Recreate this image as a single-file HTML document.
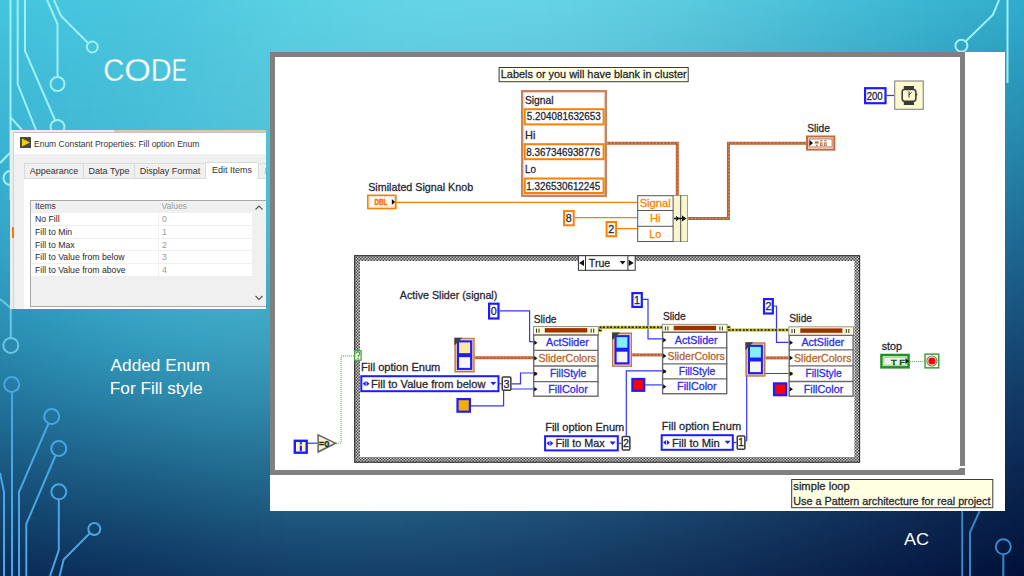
<!DOCTYPE html>
<html><head><meta charset="utf-8">
<style>
html,body{margin:0;padding:0;}
body{width:1024px;height:576px;overflow:hidden;position:relative;font-family:"Liberation Sans",sans-serif;
background:linear-gradient(172deg,#62cde0 0%,#52c0d8 22%,#3aa6c8 45%,#2180ab 62%,#16578a 78%,#0e3a6a 90%,#0b2c5a 100%);}
.abs{position:absolute;}
#bgdark{left:0;top:0;width:1024px;height:576px;background:radial-gradient(ellipse 700px 500px at 1024px 576px,rgba(8,22,70,0.75),rgba(8,22,70,0) 100%);}
#title{left:104px;top:50px;color:#fff;font-size:30px;letter-spacing:0px;}
#note{left:111px;top:354px;color:#fff;font-size:17px;line-height:23px;}
#ac{left:904px;top:529px;color:#fff;font-size:15px;}
.tab{height:15px;border:1px solid #dadada;border-right:0;background:#f0f0f0;font-size:9px;color:#333;text-align:center;line-height:15px;box-sizing:border-box;height:16px;}
.lrow{left:21px;width:221px;height:12.8px;background:#fff;border-bottom:1px solid #efefef;box-sizing:border-box;font-size:8.7px;color:#2a2a2a;line-height:13.6px;padding-left:4px;}
.lrow span{position:absolute;left:126.5px;top:0;color:#9a9a9a;border-left:1px solid #efefef;padding-left:3.5px;height:12px;}
</style></head><body>
<div class="abs" style="left:0;top:0;width:1024px;height:576px;overflow:hidden;"><div class="abs" style="left:-40px;top:-36px;width:1104px;height:648px;filter:blur(7px);">
<div style="height:12px;background:linear-gradient(90deg,#43c8e3 0px,#46c9e3 48px,#48cae2 96px,#4bcae2 144px,#4ecce2 192px,#52cee3 240px,#57d1e5 288px,#5cd4e6 336px,#60d6e8 384px,#63d8e9 432px,#66d8e9 480px,#67d8e9 528px,#67d8e8 576px,#65d6e7 624px,#61d4e6 672px,#5dd1e4 720px,#57cde2 768px,#51cae0 816px,#4bc6dd 864px,#44c2db 912px,#3fbed8 960px,#39b9d5 1008px,#35b5d2 1056px,#31b0ce 1104px)"></div>
<div style="height:12px;background:linear-gradient(90deg,#43c6e1 0px,#45c7e1 48px,#47c8e1 96px,#4ac9e0 144px,#4dcae0 192px,#52cce1 240px,#57cfe3 288px,#5bd2e5 336px,#5fd5e6 384px,#63d6e7 432px,#65d7e8 480px,#66d7e7 528px,#66d6e7 576px,#64d4e6 624px,#61d1e4 672px,#5ccee2 720px,#56cbe0 768px,#50c7de 816px,#4ac3db 864px,#43bfd8 912px,#3dbbd5 960px,#38b6d2 1008px,#34b2cf 1056px,#30adcc 1104px)"></div>
<div style="height:12px;background:linear-gradient(90deg,#42c5e0 0px,#44c6e0 48px,#46c6e0 96px,#49c7df 144px,#4cc8df 192px,#51cbe0 240px,#56cee2 288px,#5bd1e4 336px,#5fd3e5 384px,#62d4e6 432px,#65d5e6 480px,#66d5e6 528px,#66d4e5 576px,#64d2e4 624px,#60cfe2 672px,#5bcce0 720px,#55c8de 768px,#4fc5db 816px,#49c1d9 864px,#42bcd6 912px,#3cb8d3 960px,#37b3d0 1008px,#32afcd 1056px,#2eaac9 1104px)"></div>
<div style="height:12px;background:linear-gradient(90deg,#41c3de 0px,#43c4df 48px,#46c5de 96px,#48c6de 144px,#4cc7de 192px,#50c9df 240px,#56cde1 288px,#5ad0e3 336px,#5ed2e4 384px,#62d3e5 432px,#64d3e5 480px,#65d3e4 528px,#65d2e3 576px,#63d0e2 624px,#5fcde0 672px,#5acade 720px,#54c6dc 768px,#4ec2d9 816px,#48bed7 864px,#41b9d4 912px,#3bb5d1 960px,#36b0cd 1008px,#31acca 1056px,#2da7c7 1104px)"></div>
<div style="height:12px;background:linear-gradient(90deg,#40c1dd 0px,#42c3dd 48px,#45c3dd 96px,#48c4dd 144px,#4bc5dd 192px,#50c8de 240px,#55cbe0 288px,#5acee2 336px,#5ed0e3 384px,#61d1e3 432px,#63d2e3 480px,#64d1e3 528px,#64d0e2 576px,#62cee0 624px,#5ecbde 672px,#59c7dc 720px,#54c3da 768px,#4dbfd7 816px,#47bbd4 864px,#40b7d1 912px,#3ab2ce 960px,#35adcb 1008px,#30a9c7 1056px,#2ca4c4 1104px)"></div>
<div style="height:12px;background:linear-gradient(90deg,#3fc0dc 0px,#42c1dc 48px,#44c2dc 96px,#47c3dc 144px,#4bc4dc 192px,#4fc7dd 240px,#55cadf 288px,#59cde1 336px,#5dcfe2 384px,#60d0e2 432px,#62d0e2 480px,#64cfe1 528px,#64cee0 576px,#62cbde 624px,#5ec8dc 672px,#58c5da 720px,#53c1d7 768px,#4cbdd5 816px,#46b8d2 864px,#3fb4cf 912px,#39afcc 960px,#34aac8 1008px,#2fa5c5 1056px,#2ba1c2 1104px)"></div>
<div style="height:12px;background:linear-gradient(90deg,#3fbeda 0px,#41c0db 48px,#44c1db 96px,#47c2db 144px,#4ac3db 192px,#4fc6dc 240px,#54c9de 288px,#59cce0 336px,#5dcde1 384px,#60cee1 432px,#62cee1 480px,#63cde0 528px,#63ccde 576px,#61c9dc 624px,#5dc6da 672px,#57c2d8 720px,#52bed5 768px,#4bbad3 816px,#45b5d0 864px,#3eb1cd 912px,#38acc9 960px,#33a7c6 1008px,#2ea2c2 1056px,#2a9ebf 1104px)"></div>
<div style="height:12px;background:linear-gradient(90deg,#3ebcd9 0px,#40beda 48px,#43c0da 96px,#46c1da 144px,#4ac2da 192px,#4fc5dc 240px,#54c8dd 288px,#58cbdf 336px,#5cccdf 384px,#5fcde0 432px,#61ccdf 480px,#62cbde 528px,#62c9dd 576px,#60c7db 624px,#5bc3d8 672px,#56c0d6 720px,#50bbd3 768px,#4ab7d0 816px,#44b3cd 864px,#3daeca 912px,#37a9c7 960px,#32a4c3 1008px,#2d9fc0 1056px,#299bbc 1104px)"></div>
<div style="height:12px;background:linear-gradient(90deg,#3dbbd8 0px,#40bdd9 48px,#42bed9 96px,#46c0da 144px,#49c2da 192px,#4ec4db 240px,#53c7dd 288px,#58c9de 336px,#5bcbde 384px,#5ecbde 432px,#60cbde 480px,#61c9dd 528px,#61c7db 576px,#5ec5d9 624px,#5ac1d6 672px,#55bdd4 720px,#4fb9d1 768px,#49b4ce 816px,#43b0cb 864px,#3cabc8 912px,#36a6c4 960px,#31a1c1 1008px,#2c9cbd 1056px,#2898ba 1104px)"></div>
<div style="height:12px;background:linear-gradient(90deg,#3cb9d7 0px,#3fbbd8 48px,#42bdd9 96px,#45bfd9 144px,#49c1d9 192px,#4ec4db 240px,#53c6dc 288px,#57c8dd 336px,#5bc9dd 384px,#5dcadd 432px,#5fc9dc 480px,#60c7db 528px,#5fc5d9 576px,#5dc2d7 624px,#59bfd4 672px,#54bad2 720px,#4eb6cf 768px,#48b1cc 816px,#42adc8 864px,#3ba8c5 912px,#35a3c2 960px,#309ebe 1008px,#2b99bb 1056px,#2795b7 1104px)"></div>
<div style="height:12px;background:linear-gradient(90deg,#3cb7d5 0px,#3ebad7 48px,#41bcd8 96px,#45bed8 144px,#49c0d9 192px,#4ec3da 240px,#53c5db 288px,#57c7dc 336px,#5ac8dc 384px,#5cc8dc 432px,#5ec7db 480px,#5fc5d9 528px,#5ec3d7 576px,#5cc0d5 624px,#58bcd2 672px,#53b8cf 720px,#4db3cc 768px,#47afc9 816px,#41aac6 864px,#3aa5c3 912px,#34a0bf 960px,#2f9bbc 1008px,#2a96b8 1056px,#2691b5 1104px)"></div>
<div style="height:12px;background:linear-gradient(90deg,#3bb6d4 0px,#3eb9d6 48px,#41bbd7 96px,#44bdd8 144px,#48c0d9 192px,#4dc2da 240px,#52c5db 288px,#56c6db 336px,#59c7db 384px,#5bc7db 432px,#5dc5d9 480px,#5ec3d8 528px,#5dc1d6 576px,#5abdd3 624px,#57bad0 672px,#52b5cd 720px,#4cb1ca 768px,#46acc7 816px,#40a7c4 864px,#39a2c0 912px,#339dbd 960px,#2e98b9 1008px,#2993b6 1056px,#258eb2 1104px)"></div>
<div style="height:12px;background:linear-gradient(90deg,#3ab4d3 0px,#3db7d5 48px,#40bad6 96px,#44bcd7 144px,#48bfd8 192px,#4dc1d9 240px,#52c4da 288px,#55c5db 336px,#58c6da 384px,#5ac5d9 432px,#5cc4d8 480px,#5cc1d6 528px,#5bbfd4 576px,#59bbd1 624px,#55b7ce 672px,#50b2cb 720px,#4baec8 768px,#45a9c4 816px,#3ea4c1 864px,#389fbe 912px,#339aba 960px,#2d95b7 1008px,#2990b3 1056px,#248baf 1104px)"></div>
<div style="height:12px;background:linear-gradient(90deg,#39b2d2 0px,#3cb6d4 48px,#40b9d6 96px,#43bcd7 144px,#48bed8 192px,#4cc1d9 240px,#51c3d9 288px,#54c4da 336px,#57c4d9 384px,#59c3d8 432px,#5bc2d7 480px,#5bbfd4 528px,#5abcd2 576px,#58b9cf 624px,#54b4cc 672px,#4fb0c9 720px,#4aabc5 768px,#44a6c2 816px,#3da1be 864px,#379cbb 912px,#3297b8 960px,#2c92b4 1008px,#288db1 1056px,#2488ad 1104px)"></div>
<div style="height:12px;background:linear-gradient(90deg,#38b1d0 0px,#3bb4d3 48px,#3fb8d5 96px,#43bbd6 144px,#47bed7 192px,#4cc0d8 240px,#50c2d9 288px,#54c3d9 336px,#56c3d8 384px,#58c2d7 432px,#59c0d5 480px,#5abdd3 528px,#59bad0 576px,#56b6cd 624px,#52b2ca 672px,#4eadc6 720px,#48a8c3 768px,#42a3bf 816px,#3c9ebc 864px,#3698b8 912px,#3193b5 960px,#2b8fb1 1008px,#278aae 1056px,#2385aa 1104px)"></div>
<div style="height:12px;background:linear-gradient(90deg,#38afcf 0px,#3bb3d2 48px,#3eb7d4 96px,#42bad6 144px,#47bdd7 192px,#4bbfd8 240px,#4fc1d8 288px,#53c2d8 336px,#55c1d7 384px,#57c0d6 432px,#58bed3 480px,#58bbd1 528px,#57b7ce 576px,#55b3cb 624px,#51afc8 672px,#4caac4 720px,#47a5c1 768px,#41a0bd 816px,#3b9ab9 864px,#3595b6 912px,#3090b2 960px,#2b8baf 1008px,#2686ab 1056px,#2281a7 1104px)"></div>
<div style="height:12px;background:linear-gradient(90deg,#37adcd 0px,#3ab1d0 48px,#3eb5d3 96px,#42b9d5 144px,#46bcd6 192px,#4bbed7 240px,#4fc0d8 288px,#52c0d7 336px,#54c0d6 384px,#56bed4 432px,#57bcd2 480px,#57b9cf 528px,#56b5cc 576px,#53b1c9 624px,#4facc5 672px,#4ba7c2 720px,#46a2be 768px,#409dba 816px,#3a97b7 864px,#3492b3 912px,#2f8daf 960px,#2a88ac 1008px,#2583a8 1056px,#217ea4 1104px)"></div>
<div style="height:12px;background:linear-gradient(90deg,#36abcc 0px,#39b0cf 48px,#3db4d2 96px,#41b8d4 144px,#45bbd6 192px,#4abdd7 240px,#4ebfd7 288px,#51bfd6 336px,#53bed5 384px,#55bcd3 432px,#55bad0 480px,#55b6cd 528px,#54b3ca 576px,#52aec7 624px,#4ea9c3 672px,#49a4bf 720px,#449fbc 768px,#3f99b8 816px,#3994b4 864px,#338eb0 912px,#2e89ac 960px,#2984a9 1008px,#247fa5 1056px,#207aa1 1104px)"></div>
<div style="height:12px;background:linear-gradient(90deg,#35a9ca 0px,#38aece 48px,#3cb3d1 96px,#40b7d4 144px,#45bad5 192px,#49bcd6 240px,#4dbed6 288px,#50bed5 336px,#52bdd4 384px,#53bad1 432px,#54b8cf 480px,#54b4cb 528px,#52b0c8 576px,#50abc4 624px,#4ca7c1 672px,#48a1bd 720px,#439cb9 768px,#3d96b5 816px,#3891b1 864px,#328bad 912px,#2d86a9 960px,#2881a6 1008px,#237ca2 1056px,#1f769e 1104px)"></div>
<div style="height:12px;background:linear-gradient(90deg,#34a7c9 0px,#38accd 48px,#3bb1d0 96px,#40b5d3 144px,#44b9d5 192px,#48bbd5 240px,#4cbcd5 288px,#4fbcd4 336px,#51bbd2 384px,#52b8d0 432px,#53b5cd 480px,#52b2ca 528px,#51adc6 576px,#4ea9c2 624px,#4ba4be 672px,#469eba 720px,#4199b6 768px,#3c93b2 816px,#368dae 864px,#3188aa 912px,#2c82a6 960px,#277da3 1008px,#22789f 1056px,#1e739b 1104px)"></div>
<div style="height:12px;background:linear-gradient(90deg,#33a5c7 0px,#37aacb 48px,#3ab0cf 96px,#3fb4d2 144px,#43b8d4 192px,#47bad4 240px,#4bbbd4 288px,#4ebbd3 336px,#50b9d1 384px,#51b6ce 432px,#51b3cb 480px,#51afc7 528px,#4fabc4 576px,#4da6c0 624px,#49a1bc 672px,#459bb8 720px,#4096b4 768px,#3b90b0 816px,#358aab 864px,#3084a7 912px,#2b7fa3 960px,#2679a0 1008px,#21749c 1056px,#1d6f97 1104px)"></div>
<div style="height:12px;background:linear-gradient(90deg,#32a3c5 0px,#36a8ca 48px,#3aaece 96px,#3eb3d1 144px,#42b6d3 192px,#46b9d3 240px,#4abad3 288px,#4db9d2 336px,#4eb7cf 384px,#4fb4cc 432px,#4fb1c9 480px,#4fadc5 528px,#4da8c2 576px,#4ba3be 624px,#489eba 672px,#4398b5 720px,#3f92b1 768px,#398dad 816px,#3487a9 864px,#2f81a4 912px,#297ba0 960px,#25759c 1008px,#207098 1056px,#1c6b94 1104px)"></div>
<div style="height:12px;background:linear-gradient(90deg,#31a0c3 0px,#35a6c8 48px,#39accc 96px,#3db1cf 144px,#41b5d2 192px,#45b7d2 240px,#49b8d2 288px,#4bb7d0 336px,#4db5ce 384px,#4eb2cb 432px,#4eaec7 480px,#4daac3 528px,#4ca5bf 576px,#49a0bb 624px,#469bb7 672px,#4295b3 720px,#3d8fae 768px,#3889aa 816px,#3383a6 864px,#2e7da1 912px,#28779d 960px,#247299 1008px,#1f6c95 1056px,#1b6791 1104px)"></div>
<div style="height:12px;background:linear-gradient(90deg,#309ec1 0px,#34a4c6 48px,#38aacb 96px,#3cafce 144px,#40b3d0 192px,#44b5d1 240px,#48b6d1 288px,#4ab5cf 336px,#4bb3cc 384px,#4cb0c9 432px,#4cacc5 480px,#4ba7c1 528px,#4aa2bd 576px,#479db9 624px,#4498b4 672px,#4092b0 720px,#3c8cac 768px,#3786a7 816px,#3280a3 864px,#2c7a9e 912px,#27749a 960px,#236e96 1008px,#1e6892 1056px,#1a638d 1104px)"></div>
<div style="height:12px;background:linear-gradient(90deg,#2f9bbf 0px,#33a2c4 48px,#36a8c9 96px,#3badcd 144px,#3fb1cf 192px,#43b4d0 240px,#46b4cf 288px,#49b3cd 336px,#4ab0ca 384px,#4badc7 432px,#4ba9c3 480px,#4aa4bf 528px,#489fbb 576px,#469ab6 624px,#4295b2 672px,#3f8fad 720px,#3a89a9 768px,#3583a4 816px,#307ca0 864px,#2b769b 912px,#267097 960px,#216a92 1008px,#1d648e 1056px,#19608a 1104px)"></div>
<div style="height:12px;background:linear-gradient(90deg,#2e98bc 0px,#319fc2 48px,#35a5c7 96px,#3aabcb 144px,#3eafcd 192px,#42b1ce 240px,#45b2cd 288px,#47b1cb 336px,#48aec8 384px,#49aac4 432px,#49a6c0 480px,#48a1bc 528px,#469cb8 576px,#4497b4 624px,#4191af 672px,#3d8cab 720px,#3985a6 768px,#347fa1 816px,#2f799d 864px,#2a7398 912px,#256c94 960px,#20668f 1008px,#1c618b 1056px,#185c87 1104px)"></div>
<div style="height:12px;background:linear-gradient(90deg,#2d95ba 0px,#309cbf 48px,#34a3c5 96px,#38a8c9 144px,#3dadcb 192px,#41afcc 240px,#44b0cb 288px,#46aec9 336px,#47abc6 384px,#47a8c2 432px,#47a3be 480px,#469eba 528px,#4499b5 576px,#4294b1 624px,#3f8eac 672px,#3b88a8 720px,#3782a3 768px,#327c9e 816px,#2e759a 864px,#296f95 912px,#246990 960px,#1f628c 1008px,#1b5d87 1056px,#175883 1104px)"></div>
<div style="height:12px;background:linear-gradient(90deg,#2c92b7 0px,#2f99bd 48px,#33a0c2 96px,#37a6c7 144px,#3baac9 192px,#3fadca 240px,#42adc9 288px,#44acc7 336px,#45a9c4 384px,#45a5c0 432px,#45a0bc 480px,#449bb7 528px,#4396b3 576px,#4091ae 624px,#3d8baa 672px,#3a85a5 720px,#357fa0 768px,#31789b 816px,#2c7297 864px,#286b92 912px,#23658d 960px,#1e5f88 1008px,#1a5984 1056px,#165480 1104px)"></div>
<div style="height:12px;background:linear-gradient(90deg,#2a8fb4 0px,#2e96ba 48px,#319dc0 96px,#36a3c4 144px,#3aa7c6 192px,#3eaac8 240px,#41abc7 288px,#42a9c5 336px,#43a6c1 384px,#44a2bd 432px,#439db9 480px,#4298b5 528px,#4193b0 576px,#3e8dac 624px,#3b88a7 672px,#3882a2 720px,#347b9d 768px,#307598 816px,#2b6f94 864px,#26688f 912px,#22618a 960px,#1d5b85 1008px,#195580 1056px,#15517c 1104px)"></div>
<div style="height:12px;background:linear-gradient(90deg,#298bb1 0px,#2c92b7 48px,#3099bd 96px,#349fc1 144px,#38a4c4 192px,#3ca7c5 240px,#3fa7c4 288px,#40a6c2 336px,#41a2bf 384px,#429ebb 432px,#419ab6 480px,#4095b2 528px,#3f90ad 576px,#3d8aa9 624px,#3a84a4 672px,#367e9f 720px,#32789a 768px,#2e7295 816px,#2a6b90 864px,#25648b 912px,#215e86 960px,#1c5782 1008px,#18527d 1056px,#144d79 1104px)"></div>
<div style="height:12px;background:linear-gradient(90deg,#2888ae 0px,#2b8fb4 48px,#2f96ba 96px,#339cbe 144px,#37a0c1 192px,#3aa3c2 240px,#3da4c2 288px,#3fa2bf 336px,#3f9fbc 384px,#409bb8 432px,#3f96b3 480px,#3e91af 528px,#3d8caa 576px,#3b87a6 624px,#3881a1 672px,#347b9c 720px,#317597 768px,#2d6e92 816px,#28688d 864px,#246188 912px,#1f5a83 960px,#1b547e 1008px,#174e7a 1056px,#134975 1104px)"></div>
<div style="height:12px;background:linear-gradient(90deg,#2684aa 0px,#2a8bb0 48px,#2d92b6 96px,#3198ba 144px,#359cbd 192px,#389fbf 240px,#3ba0be 288px,#3d9fbc 336px,#3d9bb9 384px,#3e97b5 432px,#3d93b1 480px,#3c8eac 528px,#3b89a8 576px,#3983a3 624px,#367d9e 672px,#337799 720px,#2f7194 768px,#2b6b8f 816px,#27648a 864px,#235d85 912px,#1e5780 960px,#1a507b 1008px,#164a76 1056px,#124672 1104px)"></div>
<div style="height:12px;background:linear-gradient(90deg,#2580a7 0px,#2887ac 48px,#2c8db2 96px,#2f93b7 144px,#3398b9 192px,#369bbb 240px,#399cbb 288px,#3b9bb9 336px,#3b98b6 384px,#3c94b2 432px,#3b8fad 480px,#3b8aa9 528px,#3985a4 576px,#3780a0 624px,#347a9b 672px,#317496 720px,#2d6e91 768px,#2a678c 816px,#256187 864px,#215a82 912px,#1d537c 960px,#194d77 1008px,#154773 1056px,#11426f 1104px)"></div>
<div style="height:12px;background:linear-gradient(90deg,#247ca3 0px,#2782a8 48px,#2a89ae 96px,#2d8fb2 144px,#3193b5 192px,#3497b7 240px,#3798b7 288px,#3897b5 336px,#3994b2 384px,#3a90ae 432px,#398caa 480px,#3887a6 528px,#3781a1 576px,#357c9d 624px,#327698 672px,#2f7093 720px,#2c6a8e 768px,#286489 816px,#245d84 864px,#20577f 912px,#1c5079 960px,#184974 1008px,#14446f 1056px,#103f6b 1104px)"></div>
<div style="height:12px;background:linear-gradient(90deg,#22779f 0px,#257ea4 48px,#2884a9 96px,#2b8aae 144px,#2f8eb1 192px,#3292b3 240px,#3493b3 288px,#3692b2 336px,#3790af 384px,#388cab 432px,#3788a7 480px,#3683a3 528px,#357e9e 576px,#33789a 624px,#307395 672px,#2d6d90 720px,#2a678b 768px,#276086 816px,#235a81 864px,#1f537b 912px,#1b4c76 960px,#174671 1008px,#13406c 1056px,#0f3c68 1104px)"></div>
<div style="height:12px;background:linear-gradient(90deg,#21739b 0px,#2479a0 48px,#277fa5 96px,#2a84a9 144px,#2d89ac 192px,#308dae 240px,#328faf 288px,#348eae 336px,#358bab 384px,#3588a8 432px,#3584a4 480px,#347f9f 528px,#337a9b 576px,#317596 624px,#2f6f92 672px,#2c698d 720px,#286388 768px,#255d83 816px,#21567e 864px,#1d5078 912px,#1a4973 960px,#16436d 1008px,#123d68 1056px,#0e3864 1104px)"></div>
<div style="height:12px;background:linear-gradient(90deg,#1f6e97 0px,#22749b 48px,#257aa0 96px,#287fa4 144px,#2b84a7 192px,#2d88aa 240px,#308aab 288px,#3289aa 336px,#3387a7 384px,#3384a4 432px,#3380a0 480px,#327b9c 528px,#317698 576px,#2f7193 624px,#2d6b8f 672px,#2a668a 720px,#276085 768px,#235980 816px,#20537a 864px,#1c4c75 912px,#18466f 960px,#153f6a 1008px,#113965 1056px,#0e3561 1104px)"></div>
<div style="height:12px;background:linear-gradient(90deg,#1e6a92 0px,#206f97 48px,#23749b 96px,#26799f 144px,#287ea2 192px,#2b82a5 240px,#2d85a6 288px,#2f84a5 336px,#3182a3 384px,#317fa0 432px,#317c9d 480px,#307799 528px,#2f7294 576px,#2d6d90 624px,#2b688b 672px,#286286 720px,#255c82 768px,#22567d 816px,#1e5077 864px,#1b4972 912px,#17436c 960px,#143c67 1008px,#103662 1056px,#0d325e 1104px)"></div>
<div style="height:12px;background:linear-gradient(90deg,#1c658e 0px,#1f6a92 48px,#216f96 96px,#24749a 144px,#26799d 192px,#297da0 240px,#2b7fa2 288px,#2d7fa1 336px,#2e7e9f 384px,#2f7b9c 432px,#2f7799 480px,#2e7395 528px,#2d6e91 576px,#2b698c 624px,#296488 672px,#265e83 720px,#23597e 768px,#205279 816px,#1d4c74 864px,#1a466f 912px,#163f69 960px,#123963 1008px,#0f335e 1056px,#0c2f5a 1104px)"></div>
<div style="height:12px;background:linear-gradient(90deg,#1b6089 0px,#1d658d 48px,#1f6991 96px,#226e95 144px,#247398 192px,#26779b 240px,#297a9d 288px,#2b7a9d 336px,#2c799b 384px,#2d7698 432px,#2d7395 480px,#2c6f91 528px,#2b6a8d 576px,#296589 624px,#276085 672px,#255b80 720px,#22557b 768px,#1f4f76 816px,#1c4971 864px,#18436b 912px,#153c66 960px,#113660 1008px,#0e305b 1056px,#0a2c57 1104px)"></div>
<div style="height:12px;background:linear-gradient(90deg,#195b85 0px,#1b6088 48px,#1e648c 96px,#20688f 144px,#226d93 192px,#247196 240px,#267498 288px,#297598 336px,#2a7497 384px,#2b7294 432px,#2b6f91 480px,#2a6b8e 528px,#29668a 576px,#276186 624px,#255c81 672px,#23577d 720px,#205178 768px,#1d4c73 816px,#1a466e 864px,#173f68 912px,#143963 960px,#10335d 1008px,#0d2d58 1056px,#092954 1104px)"></div>
<div style="height:12px;background:linear-gradient(90deg,#185780 0px,#1a5a83 48px,#1c5e87 96px,#1e638a 144px,#20678d 192px,#226c91 240px,#246f93 288px,#267093 336px,#286f92 384px,#296d90 432px,#296a8d 480px,#28668a 528px,#276286 576px,#255d82 624px,#23597e 672px,#215379 720px,#1e4e75 768px,#1c4870 816px,#19426b 864px,#163c65 912px,#123660 960px,#0f305a 1008px,#0c2a55 1056px,#082651 1104px)"></div>
<div style="height:12px;background:linear-gradient(90deg,#16527c 0px,#18557f 48px,#1a5982 96px,#1c5d85 144px,#1d6188 192px,#20668b 240px,#22698e 288px,#246a8f 336px,#266a8e 384px,#26688c 432px,#266689 480px,#266286 528px,#255e83 576px,#23597f 624px,#21557a 672px,#1f5076 720px,#1d4a71 768px,#1a456c 816px,#173f67 864px,#143962 912px,#11335d 960px,#0e2d57 1008px,#0b2752 1056px,#07234e 1104px)"></div>
<div style="height:12px;background:linear-gradient(90deg,#144d77 0px,#16507a 48px,#18547c 96px,#1a577f 144px,#1b5c83 192px,#1e6086 240px,#206389 288px,#22658a 336px,#24658a 384px,#246388 432px,#246185 480px,#245e82 528px,#235a7f 576px,#21557b 624px,#1f5177 672px,#1d4c73 720px,#1b476e 768px,#194169 816px,#163c64 864px,#13365f 912px,#10305a 960px,#0d2a54 1008px,#0a254f 1056px,#06204b 1104px)"></div>
<div style="height:12px;background:linear-gradient(90deg,#134872 0px,#154b75 48px,#164e77 96px,#18527a 144px,#19567d 192px,#1c5a81 240px,#1e5e84 288px,#206085 336px,#216085 384px,#225f84 432px,#225c81 480px,#22597e 528px,#21567b 576px,#1f5177 624px,#1e4d73 672px,#1c486f 720px,#19436b 768px,#173e66 816px,#143861 864px,#11335c 912px,#0f2d57 960px,#0c2851 1008px,#08224c 1056px,#051d48 1104px)"></div>
<div style="height:12px;background:linear-gradient(90deg,#11436e 0px,#134670 48px,#154972 96px,#164c75 144px,#175078 192px,#1a557c 240px,#1c587f 288px,#1e5a80 336px,#1f5b80 384px,#205a7f 432px,#20587d 480px,#20557b 528px,#1f5177 576px,#1d4d74 624px,#1c4970 672px,#1a446c 720px,#183f67 768px,#153a63 816px,#13355e 864px,#103059 912px,#0d2a54 960px,#0a254e 1008px,#071f4a 1056px,#041b45 1104px)"></div>
<div style="height:12px;background:linear-gradient(90deg,#103e69 0px,#11416b 48px,#13446d 96px,#144770 144px,#164b73 192px,#184f77 240px,#1a537a 288px,#1c557c 336px,#1d557c 384px,#1e557b 432px,#1e5379 480px,#1e5077 528px,#1d4d73 576px,#1b4970 624px,#1a456c 672px,#184068 720px,#163c64 768px,#14375f 816px,#11325b 864px,#0f2c56 912px,#0c2751 960px,#09224c 1008px,#061d47 1056px,#031843 1104px)"></div>
<div style="height:12px;background:linear-gradient(90deg,#0e3965 0px,#103c66 48px,#113e68 96px,#12426b 144px,#14456e 192px,#164972 240px,#184d75 288px,#1a4f77 336px,#1b5077 384px,#1c5077 432px,#1c4e75 480px,#1c4c73 528px,#1b4970 576px,#19456c 624px,#184169 672px,#163d65 720px,#143860 768px,#12335c 816px,#102e57 864px,#0d2953 912px,#0b244e 960px,#081f49 1008px,#051a44 1056px,#021540 1104px)"></div>
<div style="height:12px;background:linear-gradient(90deg,#0d3460 0px,#0e3762 48px,#0f3964 96px,#113d67 144px,#12406a 192px,#14446d 240px,#164870 288px,#184a72 336px,#194b73 384px,#1a4b72 432px,#1a4a71 480px,#1a476f 528px,#19446c 576px,#184169 624px,#163d65 672px,#153961 720px,#13345d 768px,#113059 816px,#0e2b54 864px,#0c2650 912px,#09214b 960px,#071d46 1008px,#041741 1056px,#01123d 1104px)"></div>
<div style="height:12px;background:linear-gradient(90deg,#0b305c 0px,#0c325d 48px,#0e345f 96px,#0f3862 144px,#103b65 192px,#123f68 240px,#14426b 288px,#16456d 336px,#17466e 384px,#18466e 432px,#18456d 480px,#18436b 528px,#174068 576px,#163d65 624px,#143961 672px,#13355e 720px,#11315a 768px,#0f2c55 816px,#0d2751 864px,#0a234c 912px,#081e48 960px,#051a43 1008px,#02153e 1056px,#00103a 1104px)"></div>
<div style="height:12px;background:linear-gradient(90deg,#092b57 0px,#0b2d59 48px,#0c305b 96px,#0d335d 144px,#0f3660 192px,#113a64 240px,#133d67 288px,#144069 336px,#15416a 384px,#164169 432px,#164068 480px,#163e66 528px,#153c64 576px,#143861 624px,#13355e 672px,#11315a 720px,#0f2d56 768px,#0d2852 816px,#0b244e 864px,#092049 912px,#071b45 960px,#041740 1008px,#01123c 1056px,#000d37 1104px)"></div>
<div style="height:12px;background:linear-gradient(90deg,#082653 0px,#092854 48px,#0a2b56 96px,#0c2e59 144px,#0d315c 192px,#0f355f 240px,#113862 288px,#123a64 336px,#133c65 384px,#143c65 432px,#143b64 480px,#143a62 528px,#133760 576px,#12345d 624px,#11315a 672px,#0f2d56 720px,#0e2953 768px,#0c254f 816px,#0a214a 864px,#081c46 912px,#051842 960px,#03143d 1008px,#000f39 1056px,#000a34 1104px)"></div>
<div style="height:12px;background:linear-gradient(90deg,#06224f 0px,#082450 48px,#092652 96px,#0a2954 144px,#0b2c57 192px,#0d305b 240px,#0f335d 288px,#103560 336px,#113761 384px,#123761 432px,#123760 480px,#12355e 528px,#11335c 576px,#103059 624px,#0f2d56 672px,#0e2953 720px,#0c254f 768px,#0a214b 816px,#081d47 864px,#061943 912px,#04153e 960px,#01113a 1008px,#000c36 1056px,#000731 1104px)"></div>
<div style="height:12px;background:linear-gradient(90deg,#051d4b 0px,#061f4c 48px,#07224e 96px,#082450 144px,#0a2753 192px,#0b2b56 240px,#0d2e59 288px,#0e305b 336px,#10325c 384px,#10335c 432px,#10325c 480px,#10315a 528px,#0f2f58 576px,#0e2c56 624px,#0d2953 672px,#0c254f 720px,#0a224c 768px,#091e48 816px,#071a44 864px,#051640 912px,#02123b 960px,#000d37 1008px,#000933 1056px,#00042e 1104px)"></div>
</div></div>
<svg class="abs" style="left:0;top:0" width="1024" height="576" viewBox="0 0 1024 576">
 <g fill="none" stroke="#9cf0f6" stroke-width="2">
  <path d="M10.5 0V200"/>
  <path d="M17.7 0V84L38 135"/>
  <path d="M25 0V51L55 120"/>
  <path d="M47 0L57.5 24V76.5"/>
  <circle cx="57.5" cy="84" r="7"/>
  <circle cx="57.5" cy="127" r="7"/>
  <path d="M54 0L61 16L88 43"/>
  <circle cx="92.3" cy="47" r="5.5"/>
  <path d="M10 116.6L22 130"/>
  <path d="M0 163L12 151"/>
  <circle cx="10.5" cy="178" r="7"/>
  <path d="M1007.5 0V83"/>
  <path d="M999 0L993 14.6L965.5 41.5"/>
  <circle cx="961.4" cy="45.8" r="6"/>
 </g>
 <g fill="none" stroke="#6cc6e4" stroke-width="2">
  <path d="M0 299L10.8 308V338"/>
  <circle cx="10.8" cy="345.4" r="7.5"/>
 </g>
 <g fill="none" stroke="#4aa6e0" stroke-width="2">
  <circle cx="11.7" cy="384.5" r="7.5"/>
  <path d="M12 392V576"/>
  <circle cx="51.7" cy="416.6" r="7.5"/>
  <path d="M48.5 423.5L19 492V576"/>
  <circle cx="58.8" cy="448.5" r="7.5"/>
  <path d="M55.5 455.5L26.3 524V576"/>
  <circle cx="58.8" cy="491.8" r="7.5"/>
  <path d="M58.8 499.3V550L50 576"/>
  <circle cx="94.3" cy="529" r="6"/>
  <path d="M90 533L63.7 559.6L59.6 576"/>
  <path d="M0 472.8L4 491.8V576"/>
 </g>
 <g fill="none" stroke="#3a86c4" stroke-width="2">
  <path d="M962.2 511V576"/>
  <path d="M979.6 511L970 532.3V576"/>
  <circle cx="1003.3" cy="546.8" r="7.5"/>
  <path d="M1003.3 554.3V576"/>
 </g>
</svg>
<svg class="abs" style="left:0;top:0" width="1024" height="576" font-family="Liberation Sans, sans-serif" fill="#fff">
<text x="103.32" y="80.8" font-size="32" textLength="21.10" lengthAdjust="spacingAndGlyphs" stroke="#55c4dc" stroke-width="0.3">C</text>
<text x="124.18" y="80.8" font-size="32" textLength="26.66" lengthAdjust="spacingAndGlyphs" stroke="#55c4dc" stroke-width="0.3">O</text>
<text x="150.73" y="80.8" font-size="32" textLength="20.85" lengthAdjust="spacingAndGlyphs" stroke="#55c4dc" stroke-width="0.3">D</text>
<text x="171.75" y="80.8" font-size="32" textLength="15.01" lengthAdjust="spacingAndGlyphs" stroke="#55c4dc" stroke-width="0.3">E</text>
<text x="110.6" y="371" font-size="16.1" textLength="99.6" lengthAdjust="spacingAndGlyphs">Added Enum</text>
<text x="109.8" y="393.5" font-size="16.6" textLength="92.8" lengthAdjust="spacingAndGlyphs">For Fill style</text>
<text x="903.9" y="544.6" font-size="16.4" textLength="25" lengthAdjust="spacingAndGlyphs">AC</text>
</svg>

<!-- dialog -->
<div class="abs" id="dlg" style="left:10px;top:130px;width:256px;height:179px;background:#ececec;overflow:hidden;">
 <div class="abs" style="left:3px;top:1.5px;width:253px;height:177.5px;background:#fff;border-top:1px solid #c4c4c4;border-left:1px solid #d4d4d4;"></div>
 <div class="abs" style="left:104px;top:0.3px;width:152px;height:1.6px;background:#d4cca4;"></div>
 <div class="abs" style="left:10px;top:7px;width:11px;height:11px;background:#4a4a4a;"></div>
 <svg class="abs" style="left:10px;top:7px" width="11" height="11"><path d="M2 1.5L10 5.5L2 9.5Z" fill="#f2d200"/></svg>
 <div class="abs" style="left:24px;top:8.5px;font-size:8.5px;color:#333;white-space:nowrap;">Enum Constant Properties: Fill option Enum</div>
 <div class="abs" style="left:4px;top:23.5px;width:252px;height:156px;background:#f0f0f0;"></div>
 <div class="abs" style="left:2.3px;top:97px;width:1.5px;height:11px;background:#f07a10;"></div>
 <div class="abs" style="left:13.5px;top:49px;width:243px;height:130px;background:#fff;"></div>
 <div class="abs tab" style="left:14px;top:33px;width:59px;">Appearance</div>
 <div class="abs tab" style="left:73px;top:33px;width:51px;">Data Type</div>
 <div class="abs tab" style="left:124px;top:33px;width:71px;">Display Format</div>
 <div class="abs tab" style="left:195px;top:31.5px;width:53px;height:17.5px;background:#fff;border-bottom:0;padding-top:0;">Edit Items</div>
 <div class="abs tab" style="left:248px;top:33px;width:30px;text-align:left;padding-left:6px;">D</div>
 <div class="abs" style="left:20px;top:69.5px;width:235px;height:105px;border:1px solid #a8a8a8;background:#f0f0f0;"></div>
 <div class="abs lrow" style="top:83px;">No Fill<span>0</span></div>
 <div class="abs lrow" style="top:95.8px;">Fill to Min<span>1</span></div>
 <div class="abs lrow" style="top:108.6px;">Fill to Max<span>2</span></div>
 <div class="abs lrow" style="top:121.4px;">Fill to Value from below<span>3</span></div>
 <div class="abs lrow" style="top:134.2px;">Fill to Value from above<span>4</span></div>
 <div class="abs" style="left:25px;top:71px;font-size:8.5px;color:#333;">Items</div>
 <div class="abs" style="left:151.5px;top:71px;font-size:8.5px;color:#9a9a9a;">Values</div>
 <svg class="abs" style="left:242px;top:70px" width="14" height="105"><path d="M3.5 9.5L7 6L10.5 9.5M3.5 96L7 99.5L10.5 96" fill="none" stroke="#555" stroke-width="1.1"/></svg>
</div>

<!-- main diagram -->
<svg class="abs" style="left:0;top:0" width="1024" height="576" viewBox="0 0 1024 576" font-family="Liberation Sans, sans-serif">
<rect x="270.00" y="52.00" width="735.00" height="459.00" fill="#fff" />
<path d="M270 52H965V466H960V57H275V470H958L960 468H965V475H270Z" fill="#808080"/>
<rect x="499.10" y="67.50" width="189.10" height="14.20" fill="#ffffe1" stroke="#3a3a3a" stroke-width="1" />
<text x="500.80" y="78.40" font-size="11.2" fill="#262630" stroke="#262630" stroke-width="0.28" textLength="185.80" lengthAdjust="spacingAndGlyphs" >Labels or you will have blank in cluster</text>
<rect x="522.20" y="91.20" width="83.60" height="104.60" fill="#fff" stroke="#c48662" stroke-width="2.4" />
<rect x="523.80" y="92.80" width="80.40" height="101.40" fill="none" stroke="#ecd2c0" stroke-width="0.8" />
<text x="524.90" y="104.40" font-size="11" fill="#262630" stroke="#262630" stroke-width="0.28" textLength="28.60" lengthAdjust="spacingAndGlyphs" >Signal</text>
<text x="525.00" y="139.10" font-size="11" fill="#262630" stroke="#262630" stroke-width="0.28" textLength="10.40" lengthAdjust="spacingAndGlyphs" >Hi</text>
<text x="525.00" y="173.40" font-size="11" fill="#262630" stroke="#262630" stroke-width="0.28" textLength="11.00" lengthAdjust="spacingAndGlyphs" >Lo</text>
<rect x="524.70" y="109.20" width="78.90" height="15.20" fill="#fff" stroke="#ff7f00" stroke-width="2" />
<text x="526.80" y="120.30" font-size="10.8" fill="#262630" stroke="#262630" stroke-width="0.28" textLength="74.00" lengthAdjust="spacingAndGlyphs" >5.204081632653</text>
<rect x="524.70" y="144.20" width="78.90" height="15.00" fill="#fff" stroke="#ff7f00" stroke-width="2" />
<text x="526.30" y="155.60" font-size="10.8" fill="#262630" stroke="#262630" stroke-width="0.28" textLength="74.00" lengthAdjust="spacingAndGlyphs" >8.367346938776</text>
<rect x="524.70" y="178.50" width="78.90" height="14.50" fill="#fff" stroke="#ff7f00" stroke-width="2" />
<text x="526.30" y="189.50" font-size="10.8" fill="#262630" stroke="#262630" stroke-width="0.28" textLength="74.00" lengthAdjust="spacingAndGlyphs" >1.326530612245</text>
<path d="M607 143.2H677.3V195.2" fill="none" stroke="#bd6232" stroke-width="3" />
<path d="M607 143.2H677.3V195.2" fill="none" stroke="#e0a888" stroke-width="1" stroke-dasharray="1 2.5"/>
<path d="M688 218.5H728.4V143.2H806" fill="none" stroke="#bd6232" stroke-width="3" />
<path d="M688 218.5H728.4V143.2H806" fill="none" stroke="#e0a888" stroke-width="1" stroke-dasharray="1 2.5"/>
<text x="368.20" y="190.80" font-size="11.2" fill="#262630" stroke="#262630" stroke-width="0.28" textLength="105.00" lengthAdjust="spacingAndGlyphs" >Similated Signal Knob</text>
<rect x="367.80" y="195.30" width="28.00" height="13.20" fill="#fff" stroke="#ff7f00" stroke-width="1.6" />
<rect x="369.60" y="196.70" width="24.90" height="10.30" fill="#fff" stroke="#ffc090" stroke-width="1" stroke-dasharray="1 0.8"/>
<text x="374.4" y="204.9" font-size="8.4" font-weight="bold" fill="#ff7000" stroke="#ff7000" stroke-width="0.5" textLength="12.8" lengthAdjust="spacingAndGlyphs">DBL</text>
<path d="M391.8 198.9L395.2 201.9L391.8 204.9Z" fill="#111" stroke="none" stroke-width="1" />
<path d="M396.1 202.3H637.2" fill="none" stroke="#ff7f00" stroke-width="1.3" />
<rect x="564.00" y="211.10" width="9.70" height="14.20" fill="#fff" stroke="#ff7f00" stroke-width="2" />
<text x="565.80" y="222.30" font-size="11" fill="#262630" stroke="#262630" stroke-width="0.28" textLength="6.00" lengthAdjust="spacingAndGlyphs" >8</text>
<path d="M574.7 217.7H637.2" fill="none" stroke="#ff7f00" stroke-width="1.3" />
<rect x="606.60" y="222.00" width="9.50" height="14.20" fill="#fff" stroke="#ff7f00" stroke-width="2" />
<text x="608.30" y="233.30" font-size="11" fill="#262630" stroke="#262630" stroke-width="0.28" textLength="6.00" lengthAdjust="spacingAndGlyphs" >2</text>
<path d="M617.1 228.6H637.2" fill="none" stroke="#ff7f00" stroke-width="1.3" />
<rect x="637.70" y="195.70" width="49.60" height="45.80" fill="#fff" stroke="#555" stroke-width="1" />
<rect x="673.10" y="195.70" width="14.20" height="45.80" fill="#f8f6cc" />
<path d="M673.1 195.2V242M680.7 195.2V242" fill="none" stroke="#555" stroke-width="1" />
<path d="M637.2 210.5H673.1M637.2 226.3H673.1" fill="none" stroke="#555" stroke-width="1" />
<text x="655.20" y="206.70" font-size="11.2" fill="#ff7f00" stroke="#ff7f00" stroke-width="0.28" textLength="31.00" lengthAdjust="spacingAndGlyphs" text-anchor="middle" >Signal</text>
<text x="655.20" y="222.30" font-size="11.2" fill="#ff7f00" stroke="#ff7f00" stroke-width="0.28" textLength="10.50" lengthAdjust="spacingAndGlyphs" text-anchor="middle" >Hi</text>
<text x="655.20" y="238.00" font-size="11.2" fill="#ff7f00" stroke="#ff7f00" stroke-width="0.28" textLength="12.00" lengthAdjust="spacingAndGlyphs" text-anchor="middle" >Lo</text>
<path d="M674 218.5H684" fill="none" stroke="#111" stroke-width="1.5" />
<path d="M682 215.5L686.5 218.5L682 221.5Z" fill="#111" stroke="none" stroke-width="1" />
<path d="M676 216.5L678.5 218.5L676 220.5" fill="none" stroke="#111" stroke-width="1.2" />
<text x="807.20" y="131.70" font-size="11.2" fill="#262630" stroke="#262630" stroke-width="0.28" textLength="22.80" lengthAdjust="spacingAndGlyphs" >Slide</text>
<rect x="807.00" y="136.50" width="27.30" height="13.10" fill="#fff" stroke="#c06a40" stroke-width="2" />
<rect x="809.10" y="138.90" width="23.10" height="8.10" fill="#fff" stroke="#c88060" stroke-width="1.2" />
<path d="M809.5 140L813 143L809.5 146Z" fill="#111" stroke="none" stroke-width="1" />
<rect x="814.80" y="141.30" width="3.80" height="2.30" fill="#b8704a" />
<rect x="815.80" y="144.60" width="1.80" height="1.40" fill="#b8704a" />
<rect x="820.20" y="140.20" width="2.20" height="1.20" fill="#b8704a" />
<rect x="824.30" y="140.20" width="2.20" height="1.20" fill="#b8704a" />
<rect x="820.00" y="142.40" width="2.60" height="3.60" fill="#b8704a" />
<rect x="824.10" y="142.40" width="2.60" height="3.60" fill="#b8704a" />
<rect x="821.00" y="143.30" width="0.80" height="1.80" fill="#f4e0d0" />
<rect x="825.10" y="143.30" width="0.80" height="1.80" fill="#f4e0d0" />
<rect x="865.10" y="88.20" width="20.40" height="15.00" fill="#fff" stroke="#1c1cff" stroke-width="2.2" />
<text x="866.70" y="100.00" font-size="11.5" fill="#262630" stroke="#262630" stroke-width="0.28" textLength="16.00" lengthAdjust="spacingAndGlyphs" >200</text>
<path d="M886.6 95.5H894.2" fill="none" stroke="#3535ff" stroke-width="1.2" />
<rect x="894.70" y="81.00" width="28.55" height="28.30" fill="#fcf8d0" stroke="#7a7a7a" stroke-width="1" />
<rect x="903.80" y="86.00" width="10.20" height="3.80" fill="#3a3a3a" />
<rect x="903.80" y="101.00" width="10.20" height="4.00" fill="#3a3a3a" />
<rect x="902.2" y="89.5" width="13.6" height="11.8" rx="2.2" fill="#fcf8d0" stroke="#3a3a3a" stroke-width="1.5"/>
<path d="M909 91.5V97.5M909 95L911.5 92.2" fill="none" stroke="#3a3a3a" stroke-width="1" />
<path d="M916 94.5H917.3" fill="none" stroke="#3a3a3a" stroke-width="1.5" />
<defs><pattern id="chk" width="3" height="3" patternUnits="userSpaceOnUse"><rect width="3" height="3" fill="#cacaca"/><rect width="1.5" height="1.5" fill="#4a4a4a"/><rect x="1.5" y="1.5" width="1.5" height="1.5" fill="#4a4a4a"/></pattern></defs>
<path d="M354.2 255.2H860.1V462.7H354.2Z M360 261V457H854.4V261Z" fill="url(#chk)" fill-rule="evenodd"/>
<rect x="354.70" y="255.70" width="504.90" height="206.50" fill="none" stroke="#2a2a2a" stroke-width="1" />
<rect x="578.40" y="255.70" width="56.80" height="14.60" fill="#fff" stroke="#333" stroke-width="1" />
<path d="M585.5 255.2V270.8M627.9 255.2V270.8" fill="none" stroke="#333" stroke-width="1" />
<path d="M584 259.8L579 263L584 266.1Z" fill="#111" stroke="none" stroke-width="1" />
<path d="M628.7 259.8L633.7 263L628.7 266.1Z" fill="#111" stroke="none" stroke-width="1" />
<text x="588.80" y="267.30" font-size="11.2" fill="#262630" stroke="#262630" stroke-width="0.28" textLength="21.40" lengthAdjust="spacingAndGlyphs" >True</text>
<path d="M619.7 261H625.5L622.6 264.5Z" fill="#111" stroke="none" stroke-width="1" />
<path d="M336.2 443.2H341.1V355.9H354.1" fill="none" stroke="#40a040" stroke-width="1" stroke-dasharray="1 1"/>
<rect x="354.70" y="350.70" width="6.40" height="9.50" fill="#f4f8e8" stroke="#40a040" stroke-width="1.2" />
<path d="M355.9 353.6Q356.2 351.9 357.9 351.9Q359.8 351.9 359.8 353.7Q359.8 355 358.2 355.8V357.2" fill="none" stroke="#30a030" stroke-width="1.1" />
<rect x="357.60" y="358.00" width="1.20" height="1.20" fill="#30a030" />
<rect x="294.80" y="440.80" width="11.90" height="11.90" fill="#fcf6c8" stroke="#1c1cff" stroke-width="2.4" />
<rect x="299.80" y="442.20" width="2.10" height="2.10" fill="#1c1cff" />
<rect x="299.80" y="445.60" width="2.10" height="5.60" fill="#1c1cff" />
<path d="M307.9 443.2H317.4" fill="none" stroke="#3535ff" stroke-width="1.2" />
<path d="M318.1 434.8L335.6 443.2L318.1 452Z" fill="#f8f2c8" stroke="#5a5a5a" stroke-width="1.4"/>
<text x="318.80" y="447.20" font-size="9" fill="#2a2a2a" stroke="#2a2a2a" stroke-width="0.28" textLength="10.50" lengthAdjust="spacingAndGlyphs" font-weight="bold" >=0</text>
<text x="399.80" y="298.50" font-size="11.2" fill="#262630" stroke="#262630" stroke-width="0.28" textLength="97.50" lengthAdjust="spacingAndGlyphs" >Active Slider (signal)</text>
<rect x="489.10" y="303.70" width="9.40" height="14.80" fill="#fff" stroke="#1c1cff" stroke-width="2.2" />
<text x="490.80" y="315.30" font-size="11" fill="#262630" stroke="#262630" stroke-width="0.28" textLength="6.00" lengthAdjust="spacingAndGlyphs" >0</text>
<path d="M499.6 310.8H529.6V341.7H533.4" fill="none" stroke="#3535ff" stroke-width="1.2" />
<text x="533.80" y="322.60" font-size="11.2" fill="#262630" stroke="#262630" stroke-width="0.28" textLength="22.70" lengthAdjust="spacingAndGlyphs" >Slide</text>
<text x="361.00" y="370.90" font-size="11.2" fill="#262630" stroke="#262630" stroke-width="0.28" textLength="79.30" lengthAdjust="spacingAndGlyphs" >Fill option Enum</text>
<rect x="361.30" y="376.20" width="137.20" height="15.00" fill="#fff" stroke="#1c1cff" stroke-width="2" />
<path d="M362.7 383.7L365.7 381.09999999999997V386.3Z M369.5 383.7L366.5 381.09999999999997V386.3Z" fill="#1c1cff" stroke="none" stroke-width="1" />
<text x="371.00" y="387.90" font-size="11" fill="#262630" stroke="#262630" stroke-width="0.28" textLength="114.50" lengthAdjust="spacingAndGlyphs" >Fill to Value from below</text>
<path d="M490.3 382.0H496.3L493.3 385.3Z" fill="#1c1cff" stroke="none" stroke-width="1" />
<rect x="455.15" y="338.55" width="18.80" height="33.20" fill="#fff" stroke="#c07850" stroke-width="1.5" />
<rect x="456.80" y="340.20" width="15.50" height="29.90" fill="none" stroke="#d09070" stroke-width="0.8" />
<rect x="457.00" y="340.40" width="15.10" height="29.50" fill="#1c1cff" />
<rect x="459.00" y="342.40" width="11.10" height="10.75" fill="#fde8a0" />
<rect x="459.00" y="357.15" width="11.10" height="10.75" fill="#f6f6f6" />
<path d="M454.4 337.8H462.4L454.4 345.5Z" fill="#404040" stroke="none" stroke-width="1" />
<path d="M474.7 357.8H533" fill="none" stroke="#bd6232" stroke-width="3" />
<path d="M474.7 357.8H533" fill="none" stroke="#e0a888" stroke-width="1" stroke-dasharray="1 2.5"/>
<path d="M499.5 383.7H501.5" fill="none" stroke="#3535ff" stroke-width="1.2" />
<path d="M511.6 383.9H520.5V373H533.4" fill="none" stroke="#3535ff" stroke-width="1.2" />
<path d="M471 405.8H503.6V389H533.4" fill="none" stroke="#3535ff" stroke-width="1.2" />
<rect x="502.25" y="376.95" width="8.600000000000023" height="13.400000000000034" rx="1" fill="#fff" stroke="#3a3a3a" stroke-width="1.5"/>
<text x="506.55" y="387.50" font-size="11" fill="#262630" stroke="#262630" stroke-width="0.28" textLength="6.00" lengthAdjust="spacingAndGlyphs" text-anchor="middle" >3</text>
<rect x="457.50" y="399.10" width="12.40" height="12.60" fill="#f0b000" stroke="#1c1cff" stroke-width="2.2" />
<rect x="533.70" y="326.90" width="64.30" height="69.30" fill="#fff" stroke="#6a6a6a" stroke-width="1.4" />
<rect x="533.70" y="326.90" width="64.30" height="7.70" fill="#fcf8da" />
<rect x="544.80" y="328.10" width="42.50" height="4.40" fill="#a03000" />
<path d="M533 335H598.7" fill="none" stroke="#6a6a6a" stroke-width="1.4" />
<text x="546.00" y="346.20" font-size="11" fill="#2a2af0" stroke="#2a2af0" stroke-width="0.28" textLength="42.80" lengthAdjust="spacingAndGlyphs" >ActSlider</text>
<path d="M534.2 340.40L537.5 342.70L534.2 345.00Z" fill="#111" stroke="none" stroke-width="1" />
<path d="M533 350.4H598.7" fill="none" stroke="#6a6a6a" stroke-width="1.4" />
<text x="538.60" y="361.80" font-size="11" fill="#b8642a" stroke="#b8642a" stroke-width="0.28" textLength="57.40" lengthAdjust="spacingAndGlyphs" >SliderColors</text>
<path d="M534.2 355.90L537.5 358.20L534.2 360.50Z" fill="#111" stroke="none" stroke-width="1" />
<path d="M533 366H598.7" fill="none" stroke="#6a6a6a" stroke-width="1.4" />
<text x="549.90" y="377.40" font-size="11" fill="#2a2af0" stroke="#2a2af0" stroke-width="0.28" textLength="36.50" lengthAdjust="spacingAndGlyphs" >FillStyle</text>
<circle cx="535.6" cy="373.80" r="1.7" fill="#e02020"/>
<path d="M534.2 371.50L537.5 373.80L534.2 376.10Z" fill="#111" stroke="none" stroke-width="1" />
<path d="M533 381.6H598.7" fill="none" stroke="#6a6a6a" stroke-width="1.4" />
<text x="548.20" y="392.70" font-size="11" fill="#2a2af0" stroke="#2a2af0" stroke-width="0.28" textLength="39.60" lengthAdjust="spacingAndGlyphs" >FillColor</text>
<path d="M534.2 386.95L537.5 389.25L534.2 391.55Z" fill="#111" stroke="none" stroke-width="1" />
<path d="M536.5 328.7V332.7M539.0 328.7V332.7" fill="none" stroke="#333" stroke-width="1" />
<path d="M591.2 328.7V332.7M593.7 328.7V332.7" fill="none" stroke="#333" stroke-width="1" />
<rect x="632.40" y="293.10" width="9.40" height="13.80" fill="#fff" stroke="#1c1cff" stroke-width="2.2" />
<text x="634.00" y="303.80" font-size="11" fill="#262630" stroke="#262630" stroke-width="0.28" textLength="6.00" lengthAdjust="spacingAndGlyphs" >1</text>
<path d="M642.9 299.4H648V338.9H661.9" fill="none" stroke="#3535ff" stroke-width="1.2" />
<text x="662.90" y="320.00" font-size="11.2" fill="#262630" stroke="#262630" stroke-width="0.28" textLength="22.70" lengthAdjust="spacingAndGlyphs" >Slide</text>
<rect x="612.75" y="333.25" width="18.50" height="32.90" fill="#fff" stroke="#c07850" stroke-width="1.5" />
<rect x="614.40" y="334.90" width="15.20" height="29.60" fill="none" stroke="#d09070" stroke-width="0.8" />
<rect x="614.60" y="335.10" width="14.80" height="29.20" fill="#1c1cff" />
<rect x="616.60" y="337.10" width="10.80" height="10.60" fill="#84eefc" />
<rect x="616.60" y="351.70" width="10.80" height="10.60" fill="#f6f6f6" />
<path d="M612 332.5H620L612 340.2Z" fill="#404040" stroke="none" stroke-width="1" />
<path d="M632 354.9H661.9" fill="none" stroke="#bd6232" stroke-width="3" />
<path d="M632 354.9H661.9" fill="none" stroke="#e0a888" stroke-width="1" stroke-dasharray="1 2.5"/>
<rect x="632.40" y="379.00" width="11.80" height="11.80" fill="#ff0000" stroke="#1c1cff" stroke-width="2.2" />
<path d="M645.3 384.9H661.9" fill="none" stroke="#3535ff" stroke-width="1.2" />
<path d="M626.3 435.8V370.9H661.9" fill="none" stroke="#3535ff" stroke-width="1.2" />
<text x="545.20" y="430.60" font-size="11.2" fill="#262630" stroke="#262630" stroke-width="0.28" textLength="79.00" lengthAdjust="spacingAndGlyphs" >Fill option Enum</text>
<rect x="545.10" y="436.20" width="72.70" height="14.20" fill="#fff" stroke="#1c1cff" stroke-width="2" />
<path d="M546.5 443.29999999999995L549.5 440.69999999999993V445.9Z M553.3000000000001 443.29999999999995L550.3000000000001 440.69999999999993V445.9Z" fill="#1c1cff" stroke="none" stroke-width="1" />
<text x="555.40" y="447.10" font-size="11" fill="#262630" stroke="#262630" stroke-width="0.28" textLength="49.20" lengthAdjust="spacingAndGlyphs" >Fill to Max</text>
<path d="M609.5999999999999 441.59999999999997H615.5999999999999L612.5999999999999 444.9Z" fill="#1c1cff" stroke="none" stroke-width="1" />
<path d="M618.8 443.3H621.5" fill="none" stroke="#3535ff" stroke-width="1.2" />
<rect x="622.25" y="436.55" width="7.600000000000023" height="13.5" rx="1" fill="#fff" stroke="#3a3a3a" stroke-width="1.5"/>
<text x="626.05" y="447.20" font-size="11" fill="#262630" stroke="#262630" stroke-width="0.28" textLength="6.00" lengthAdjust="spacingAndGlyphs" text-anchor="middle" >2</text>
<rect x="662.60" y="324.60" width="64.10" height="69.10" fill="#fff" stroke="#6a6a6a" stroke-width="1.4" />
<rect x="662.60" y="324.60" width="64.10" height="7.30" fill="#fcf8da" />
<rect x="673.70" y="325.80" width="42.30" height="4.40" fill="#a03000" />
<path d="M661.9 332.3H727.4" fill="none" stroke="#6a6a6a" stroke-width="1.4" />
<text x="674.80" y="343.70" font-size="11" fill="#2a2af0" stroke="#2a2af0" stroke-width="0.28" textLength="42.80" lengthAdjust="spacingAndGlyphs" >ActSlider</text>
<path d="M663.1 337.80L666.4 340.10L663.1 342.40Z" fill="#111" stroke="none" stroke-width="1" />
<path d="M661.9 347.9H727.4" fill="none" stroke="#6a6a6a" stroke-width="1.4" />
<text x="667.50" y="359.70" font-size="11" fill="#b8642a" stroke="#b8642a" stroke-width="0.28" textLength="57.40" lengthAdjust="spacingAndGlyphs" >SliderColors</text>
<path d="M663.1 353.60L666.4 355.90L663.1 358.20Z" fill="#111" stroke="none" stroke-width="1" />
<path d="M661.9 363.9H727.4" fill="none" stroke="#6a6a6a" stroke-width="1.4" />
<text x="678.80" y="374.70" font-size="11" fill="#2a2af0" stroke="#2a2af0" stroke-width="0.28" textLength="36.50" lengthAdjust="spacingAndGlyphs" >FillStyle</text>
<circle cx="664.5" cy="371.40" r="1.7" fill="#e02020"/>
<path d="M663.1 369.10L666.4 371.40L663.1 373.70Z" fill="#111" stroke="none" stroke-width="1" />
<path d="M661.9 378.9H727.4" fill="none" stroke="#6a6a6a" stroke-width="1.4" />
<text x="677.10" y="390.20" font-size="11" fill="#2a2af0" stroke="#2a2af0" stroke-width="0.28" textLength="39.60" lengthAdjust="spacingAndGlyphs" >FillColor</text>
<path d="M663.1 384.35L666.4 386.65L663.1 388.95Z" fill="#111" stroke="none" stroke-width="1" />
<path d="M665.4 326.4V330.4M667.9 326.4V330.4" fill="none" stroke="#333" stroke-width="1" />
<path d="M719.9 326.4V330.4M722.4 326.4V330.4" fill="none" stroke="#333" stroke-width="1" />
<rect x="764.00" y="299.10" width="8.80" height="14.40" fill="#fff" stroke="#1c1cff" stroke-width="2.2" />
<text x="765.60" y="310.40" font-size="11" fill="#262630" stroke="#262630" stroke-width="0.28" textLength="6.00" lengthAdjust="spacingAndGlyphs" >2</text>
<path d="M773.9 306H776.5V342.3H788.5" fill="none" stroke="#3535ff" stroke-width="1.2" />
<text x="789.30" y="322.40" font-size="11.2" fill="#262630" stroke="#262630" stroke-width="0.28" textLength="22.70" lengthAdjust="spacingAndGlyphs" >Slide</text>
<path d="M765.5 357.9H788.5" fill="none" stroke="#bd6232" stroke-width="3" />
<path d="M765.5 357.9H788.5" fill="none" stroke="#e0a888" stroke-width="1" stroke-dasharray="1 2.5"/>
<rect x="774.00" y="383.40" width="12.20" height="11.80" fill="#ff0000" stroke="#1c1cff" stroke-width="2.2" />
<path d="M746.7 441V373.5H788.5" fill="none" stroke="#3535ff" stroke-width="1.2" />
<rect x="746.15" y="343.05" width="18.60" height="32.90" fill="#fff" stroke="#c07850" stroke-width="1.5" />
<rect x="747.80" y="344.70" width="15.30" height="29.60" fill="none" stroke="#d09070" stroke-width="0.8" />
<rect x="748.00" y="344.90" width="14.90" height="29.20" fill="#1c1cff" />
<rect x="750.00" y="346.90" width="10.90" height="10.60" fill="#84eefc" />
<rect x="750.00" y="361.50" width="10.90" height="10.60" fill="#f6f6f6" />
<path d="M745.4 342.3H753.4L745.4 350.0Z" fill="#404040" stroke="none" stroke-width="1" />
<text x="661.80" y="429.90" font-size="11.2" fill="#262630" stroke="#262630" stroke-width="0.28" textLength="79.30" lengthAdjust="spacingAndGlyphs" >Fill option Enum</text>
<rect x="661.70" y="435.20" width="71.10" height="14.60" fill="#fff" stroke="#1c1cff" stroke-width="2" />
<path d="M663.1 442.5L666.1 439.9V445.1Z M669.9000000000001 442.5L666.9000000000001 439.9V445.1Z" fill="#1c1cff" stroke="none" stroke-width="1" />
<text x="672.00" y="446.50" font-size="11" fill="#262630" stroke="#262630" stroke-width="0.28" textLength="47.80" lengthAdjust="spacingAndGlyphs" >Fill to Min</text>
<path d="M724.5999999999999 440.8H730.5999999999999L727.5999999999999 444.1Z" fill="#1c1cff" stroke="none" stroke-width="1" />
<path d="M733.8 442.5H736.5" fill="none" stroke="#3535ff" stroke-width="1.2" />
<rect x="737.25" y="435.95" width="7.600000000000023" height="13.300000000000011" rx="1" fill="#fff" stroke="#3a3a3a" stroke-width="1.5"/>
<text x="741.05" y="446.40" font-size="11" fill="#262630" stroke="#262630" stroke-width="0.28" textLength="6.00" lengthAdjust="spacingAndGlyphs" text-anchor="middle" >1</text>
<path d="M745.6 441H746.7" fill="none" stroke="#3535ff" stroke-width="1.2" />
<rect x="789.20" y="327.20" width="63.90" height="69.00" fill="#fff" stroke="#6a6a6a" stroke-width="1.4" />
<rect x="789.20" y="327.20" width="63.90" height="7.80" fill="#fcf8da" />
<rect x="800.30" y="328.40" width="42.10" height="4.40" fill="#a03000" />
<path d="M788.5 335.4H853.8" fill="none" stroke="#6a6a6a" stroke-width="1.4" />
<text x="801.40" y="345.70" font-size="11" fill="#2a2af0" stroke="#2a2af0" stroke-width="0.28" textLength="42.80" lengthAdjust="spacingAndGlyphs" >ActSlider</text>
<path d="M789.7 340.35L793.0 342.65L789.7 344.95Z" fill="#111" stroke="none" stroke-width="1" />
<path d="M788.5 349.9H853.8" fill="none" stroke="#6a6a6a" stroke-width="1.4" />
<text x="794.10" y="361.70" font-size="11" fill="#b8642a" stroke="#b8642a" stroke-width="0.28" textLength="57.40" lengthAdjust="spacingAndGlyphs" >SliderColors</text>
<path d="M789.7 355.60L793.0 357.90L789.7 360.20Z" fill="#111" stroke="none" stroke-width="1" />
<path d="M788.5 365.9H853.8" fill="none" stroke="#6a6a6a" stroke-width="1.4" />
<text x="805.40" y="377.30" font-size="11" fill="#2a2af0" stroke="#2a2af0" stroke-width="0.28" textLength="36.50" lengthAdjust="spacingAndGlyphs" >FillStyle</text>
<circle cx="791.1" cy="373.70" r="1.7" fill="#e02020"/>
<path d="M789.7 371.40L793.0 373.70L789.7 376.00Z" fill="#111" stroke="none" stroke-width="1" />
<path d="M788.5 381.5H853.8" fill="none" stroke="#6a6a6a" stroke-width="1.4" />
<text x="803.70" y="392.70" font-size="11" fill="#2a2af0" stroke="#2a2af0" stroke-width="0.28" textLength="39.60" lengthAdjust="spacingAndGlyphs" >FillColor</text>
<path d="M789.7 386.90L793.0 389.20L789.7 391.50Z" fill="#111" stroke="none" stroke-width="1" />
<path d="M792.0 329.0V333.0M794.5 329.0V333.0" fill="none" stroke="#333" stroke-width="1" />
<path d="M846.3 329.0V333.0M848.8 329.0V333.0" fill="none" stroke="#333" stroke-width="1" />
<path d="M598.7 330.3H600.5V327.3H661.9" fill="none" stroke="#b4ac38" stroke-width="3.2" />
<path d="M598.7 330.3H600.5V327.3H661.9" fill="none" stroke="#181818" stroke-width="1.6" stroke-dasharray="2 1.6"/>
<path d="M598.7 330.3H600.5V327.3H661.9" fill="none" stroke="#ffe800" stroke-width="1.4" stroke-dasharray="1.2 6" stroke-dashoffset="-2.4"/>
<path d="M727.4 327.3H729V330H788.5" fill="none" stroke="#b4ac38" stroke-width="3.2" />
<path d="M727.4 327.3H729V330H788.5" fill="none" stroke="#181818" stroke-width="1.6" stroke-dasharray="2 1.6"/>
<path d="M727.4 327.3H729V330H788.5" fill="none" stroke="#ffe800" stroke-width="1.4" stroke-dasharray="1.2 6" stroke-dashoffset="-2.4"/>
<text x="881.70" y="349.80" font-size="11.2" fill="#262630" stroke="#262630" stroke-width="0.28" textLength="20.30" lengthAdjust="spacingAndGlyphs" >stop</text>
<rect x="881.45" y="355.00" width="27.10" height="12.35" fill="#fff" stroke="#209020" stroke-width="2.5" />
<rect x="883.90" y="357.20" width="22.20" height="8.00" fill="#e8f4e8" stroke="#80c080" stroke-width="0.8" />
<text x="891.00" y="364.60" font-size="8" fill="#106010" stroke="#106010" stroke-width="0.28" textLength="14.00" lengthAdjust="spacingAndGlyphs" font-weight="bold" >T F</text>
<path d="M905.5 358.3L909 361.2L905.5 364.1Z" fill="#111" stroke="none" stroke-width="1" />
<path d="M909.8 361.6H924.3" fill="none" stroke="#40a040" stroke-width="1" stroke-dasharray="1 1"/>
<rect x="925.05" y="354.15" width="13.70" height="13.70" fill="#fcfce0" stroke="#40a040" stroke-width="1.5" />
<circle cx="931.9" cy="361" r="5" fill="none" stroke="#808080" stroke-width="1.2"/>
<circle cx="931.9" cy="361" r="3.6" fill="#ff0000"/>
<rect x="791.70" y="479.50" width="201.10" height="28.20" fill="#ffffe1" stroke="#3a3a3a" stroke-width="1" />
<text x="793.30" y="490.40" font-size="11.2" fill="#262630" stroke="#262630" stroke-width="0.28" textLength="56.50" lengthAdjust="spacingAndGlyphs" >simple loop</text>
<text x="793.30" y="504.80" font-size="11.2" fill="#262630" stroke="#262630" stroke-width="0.28" textLength="197.20" lengthAdjust="spacingAndGlyphs" >Use a Pattern architecture for real project</text>
</svg>
</body></html>
